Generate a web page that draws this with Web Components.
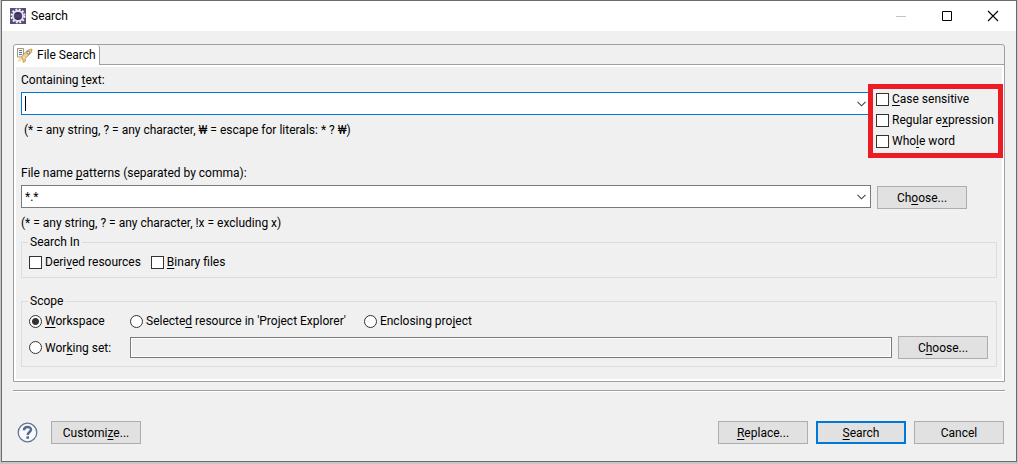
<!DOCTYPE html>
<html lang="en">
<head>
<meta charset="utf-8">
<title>Search</title>
<style>
  body {
    margin: 0;
    background: #c6c6c6;
    color: #000;
    font: 12px/16px Roboto, "Noto Sans CJK KR", sans-serif;
  }
</style>
</head>
<body>
<search-dialog>
  <search-tab>
    <search-query></search-query>
    <search-group legend="Search In">
      <choice-item type="checkbox" label="Deri_ved resources"></choice-item>
      <choice-item type="checkbox" label="_Binary files"></choice-item>
    </search-group>
    <search-scope></search-scope>
  </search-tab>
  <dialog-footer slot="footer"></dialog-footer>
</search-dialog>

<script>
// "_x" in a label marks x as its mnemonic
function mnemonic(text) {
  return text.replace(/_(.)/, '<u>$1</u>');
}

function attach(element, html) {
  const template = document.createElement('template');
  template.innerHTML = `
    <style>
      * { box-sizing: border-box; }
      u { text-underline-offset: 2px; text-decoration-thickness: 1px; text-decoration-skip-ink: none; }
    </style>${html}`;
  element.attachShadow({ mode: 'open' });
  element.shadowRoot.appendChild(template.content.cloneNode(true));
}

class PushButton extends HTMLElement {
  constructor() {
    super();
    attach(this, `
      <style>
        :host { display: block; width: 90px; flex: none; }
        button {
          display: block;
          width: 100%;
          height: 23px;
          padding: 0;
          border: 1px solid #adadad;
          border-radius: 0;
          background: #e1e1e1;
          color: inherit;
          font: inherit;
        }
        :host([default]) button { border: 2px solid #0078d7; }
      </style>
      <button type="button">${mnemonic(this.getAttribute('label'))}</button>`);
  }
}

class ChoiceItem extends HTMLElement {
  constructor() {
    super();
    attach(this, `
      <style>
        :host { display: block; flex: none; }
        label { display: flex; align-items: center; gap: 3px; white-space: nowrap; }
        input {
          appearance: none;
          flex: none;
          width: 13px;
          height: 13px;
          margin: 0;
          border: 1px solid #333;
          background: #fff;
        }
      </style>
      <label><input type="${this.getAttribute('type')}"><span>${mnemonic(this.getAttribute('label'))}</span></label>`);
  }
}

class ComboField extends HTMLElement {
  constructor() {
    super();
    const value = this.getAttribute('value') || '';
    attach(this, `
      <style>
        :host { display: block; min-width: 0; }
        label { display: block; margin-bottom: 4px; }
        .box {
          display: flex;
          align-items: center;
          height: 23px;
          padding: 0 4px 0 3px;
          border: 1px solid #7a7a7a;
          background: #fff;
        }
        :host([active]) .box { border-color: #0078d7; }
        input {
          flex: 1;
          min-width: 0;
          height: 17px;
          padding: 0;
          border: 0;
          outline: 0;
          background: none;
          color: inherit;
          font: inherit;
        }
        .caret { flex: none; width: 1px; height: 15px; background: #000; }
        button { flex: none; display: flex; padding: 0; border: 0; background: none; }
      </style>
      <label for="field">${mnemonic(this.getAttribute('label'))}</label>
      <div class="box">
        ${this.hasAttribute('active') ? '<i class="caret"></i>' : ''}
        <input id="field" type="text" value="${value}">
        <button type="button" aria-label="Show history">
          <svg width="9" height="6" viewBox="0 0 9 6" fill="none" stroke="#444" stroke-width="1.1"><path d="M.5 .8 4.5 4.8 8.5 .8"/></svg>
        </button>
      </div>`);
  }
}

class SearchGroup extends HTMLElement {
  constructor() {
    super();
    attach(this, `
      <style>
        :host { display: block; }
        fieldset {
          min-width: 0;
          margin: 0;
          padding: 4px 8px 7px 7px;
          border: 1px solid #dcdcdc;
        }
        legend { margin-left: -1px; padding: 0 2px; }
        .row { display: flex; gap: 10px; }
      </style>
      <fieldset>
        <legend>${this.getAttribute('legend')}</legend>
        <div class="row"><slot></slot></div>
      </fieldset>`);
  }
}

class SearchQuery extends HTMLElement {
  constructor() {
    super();
    attach(this, `
      <style>
        :host { display: block; }
        .grid {
          display: grid;
          grid-template-columns: minmax(0, 1fr) 120px;
          column-gap: 6px;
        }
        .options {
          position: relative;
          display: grid;
          gap: 5px;
          align-self: start;
          margin: 19px 0 0 -1px;
        }
        .mark {
          position: absolute;
          inset: -7px -6px -9px -8px;
          border: 5px solid #ed1c24;
          pointer-events: none;
        }
        p { margin: 7px 0 0; }
        .first p { padding-left: 3px; }
        .second { margin-top: 16px; }
        push-button { align-self: start; margin: 21px 0 0; }
      </style>
      <div class="grid">
        <div class="first">
          <combo-field active label="Containing _text:"></combo-field>
          <p>(* = any string, ? = any character, ₩ = escape for literals: * ? ₩)</p>
        </div>
        <div class="options">
          <choice-item type="checkbox" label="_Case sensitive"></choice-item>
          <choice-item type="checkbox" label="Regular e_xpression"></choice-item>
          <choice-item type="checkbox" label="Who_le word"></choice-item>
          <div class="mark"></div>
        </div>
      </div>
      <div class="grid second">
        <div>
          <combo-field label="File name _patterns (separated by comma):" value="*.*"></combo-field>
          <p>(* = any string, ? = any character, !x = excluding x)</p>
        </div>
        <push-button label="Ch_oose..."></push-button>
      </div>`);
  }
}

// The radios share one shadow root so that the browser groups them by name
class SearchScope extends HTMLElement {
  constructor() {
    super();
    attach(this, `
      <style>
        :host { display: block; }
        fieldset {
          min-width: 0;
          margin: 0;
          padding: 4px 8px 7px 7px;
          border: 1px solid #dcdcdc;
        }
        legend { margin-left: -1px; padding: 0 2px; }
        .grid {
          display: grid;
          grid-template-columns: 95px minmax(0, 1fr) 90px;
          align-items: center;
          gap: 7px 6px;
        }
        .rest { grid-column: 2 / -1; display: flex; gap: 18px; }
        label { display: flex; align-items: center; gap: 3px; white-space: nowrap; }
        input[type="radio"] {
          appearance: none;
          flex: none;
          width: 13px;
          height: 13px;
          margin: 0;
          border: 1px solid #333;
          border-radius: 50%;
          background: #fff;
        }
        input[type="radio"]:checked { background: radial-gradient(circle, #333 3px, #fff 4px); }
        input[type="text"] {
          width: 100%;
          height: 21px;
          border: 1px solid #7a7a7a;
          background: #f0f0f0;
          box-shadow: inset 0 0 0 1px #fff;
          font: inherit;
        }
      </style>
      <fieldset>
        <legend>Scope</legend>
        <div class="grid">
          <label><input type="radio" name="scope" checked><span><u>W</u>orkspace</span></label>
          <div class="rest">
            <label><input type="radio" name="scope"><span>Selecte<u>d</u> resource in 'Project Explorer'</span></label>
            <label><input type="radio" name="scope"><span>Enclosing pro<u>j</u>ect</span></label>
          </div>
          <label><input type="radio" name="scope"><span>Wor<u>k</u>ing set:</span></label>
          <input type="text" readonly aria-label="Working set">
          <push-button label="C_hoose..."></push-button>
        </div>
      </fieldset>`);
  }
}

class SearchTab extends HTMLElement {
  constructor() {
    super();
    attach(this, `
      <style>
        :host { display: block; }
        .folder {
          border: 1px solid #a0a0a0;
          border-radius: 3px 3px 0 0;
        }
        .strip { display: flex; height: 20px; }
        .tab {
          display: flex;
          align-items: center;
          gap: 4px;
          padding: 0 3px 0 2px;
          border: 0;
          border-right: 1px solid #a0a0a0;
          border-radius: 3px 3px 0 0;
          background: #fff;
          color: inherit;
          font: inherit;
        }
        .rest { flex: 1; border-bottom: 1px solid #a0a0a0; }
        .page {
          padding: 5px 5px 12px;
          border: 2px solid #fff;
        }
        ::slotted(search-group) { margin-top: 3px; }
        ::slotted(search-scope) { margin-top: 15px; }
      </style>
      <div class="folder">
        <div class="strip">
          <button class="tab" type="button">
            <svg width="17" height="16" viewBox="0 0 17 16">
              <path d="M1.5 1.5h6v8.500h-6z" fill="#f4f8fd" stroke="#a89a68"/>
              <path d="M3 3.500h3M3 5.500h3M3 7.500h3" stroke="#4b74b5"/>
              <path d="M1 15.500 4 10l3 2-2 1-1 2-1-1z" fill="#f9dc8a"/>
              <path d="M5.500 10 10 4.500Q12 2.500 16 2q-.2 3.500-2.200 5.200L9 11.500l.5 2.500-2 1.500-1-3.500z" fill="#f3cf8a" stroke="#b08a50" stroke-width=".8"/>
              <path d="M7 9.500 9 11.500" stroke="#fff1c7"/>
              <circle cx="12.300" cy="5.700" r="1.400" fill="#fff" stroke="#6d6f85"/>
            </svg>
            <span>File Search</span>
          </button>
          <div class="rest"></div>
        </div>
        <div class="page"><slot></slot></div>
      </div>`);
  }
}

class DialogFooter extends HTMLElement {
  constructor() {
    super();
    attach(this, `
      <style>
        :host { display: block; }
        .footer {
          display: flex;
          align-items: center;
          gap: 8px;
          padding: 30px 1px 17px 4px;
          border-top: 1px solid #a0a0a0;
          box-shadow: inset 0 1px #fff;
        }
        .help { display: flex; margin-right: 5px; padding: 0; border: 0; background: none; }
        .space { flex: 1; }
      </style>
      <div class="footer">
        <button class="help" type="button" aria-label="Help">
          <svg width="21" height="21" viewBox="0 0 21 21" fill="none">
            <circle cx="10.500" cy="10.500" r="9.300" fill="#f7f9fc" stroke="#5f7594" stroke-width="1.300"/>
            <path d="M7 8.200C7 3.700 14.200 4 14 7.800 13.900 10 10.800 10 10.700 13" stroke="#56698a" stroke-width="2.500"/>
            <path d="M9.400 14.300h2.600v2.500H9.400z" fill="#56698a"/>
          </svg>
        </button>
        <push-button label="Customi_ze..."></push-button>
        <div class="space"></div>
        <push-button label="_Replace..."></push-button>
        <push-button default label="_Search"></push-button>
        <push-button label="Cancel"></push-button>
      </div>`);
  }
}

class SearchDialog extends HTMLElement {
  constructor() {
    super();
    attach(this, `
      <style>
        :host { display: block; padding: 0 1px 2px; }
        .window { border: 1px solid #6b6b6b; background: #f0f0f0; }
        header {
          display: flex;
          align-items: center;
          height: 30px;
          padding: 0 17px 0 8px;
          background: #fff;
        }
        h1 { flex: 1; margin: 0 0 0 5px; font: inherit; }
        nav { display: flex; gap: 34px; }
        nav button { display: flex; padding: 0; border: 0; background: none; }
        main { padding: 13px 11px 0; }
        ::slotted(dialog-footer) { margin-top: 8px; }
      </style>
      <section class="window">
        <header>
          <svg width="16" height="16" viewBox="0 0 16 16">
            <path d="M0 0h16v16H0z" fill="#5a4a84"/>
            <circle cx="8" cy="8" r="6.500" fill="none" stroke="#f2f2f2" stroke-width="2" stroke-dasharray="1.900 1.503"/>
            <circle cx="8" cy="8" r="5" fill="#342a58" stroke="#e6e6e6" stroke-width="1.800"/>
            <path d="M4 7h8M4 9h8" stroke="#756a9b" stroke-width=".7"/>
          </svg>
          <h1>Search</h1>
          <nav>
            <button type="button" aria-label="Minimize"><svg width="12" height="12"><path d="M1 6.500h10" stroke="#c4c4c4"/></svg></button>
            <button type="button" aria-label="Maximize"><svg width="12" height="12" fill="none"><path d="M1.500 1.500h9v9h-9z" stroke="#000"/></svg></button>
            <button type="button" aria-label="Close"><svg width="12" height="12"><path d="M1 1 11 11M11 1 1 11" stroke="#000" stroke-width="1.100"/></svg></button>
          </nav>
        </header>
        <main>
          <slot></slot>
          <slot name="footer"></slot>
        </main>
      </section>`);
  }
}

customElements.define('push-button', PushButton);
customElements.define('choice-item', ChoiceItem);
customElements.define('combo-field', ComboField);
customElements.define('search-group', SearchGroup);
customElements.define('search-query', SearchQuery);
customElements.define('search-scope', SearchScope);
customElements.define('search-tab', SearchTab);
customElements.define('dialog-footer', DialogFooter);
customElements.define('search-dialog', SearchDialog);
</script>
</body>
</html>
